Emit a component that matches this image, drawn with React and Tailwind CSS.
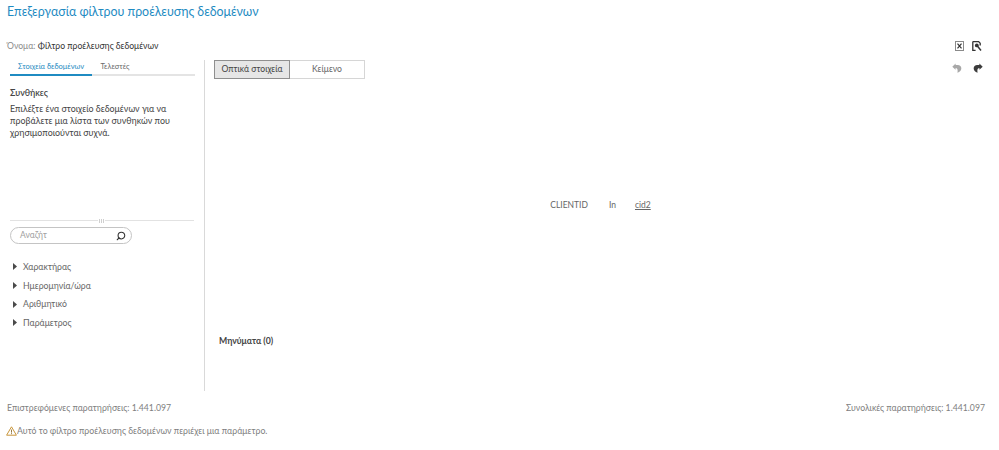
import { Search } from "lucide-react";

const font = { fontFamily: 'Lato, Roboto, sans-serif' };

const Arrow = () => (
  <svg width="4" height="7" viewBox="0 0 4 7" className="shrink-0 mr-[1px]">
    <path d="M0 0 L4 3.5 L0 7 Z" fill="#4a4a4a" />
  </svg>
);

const categories = ["Χαρακτήρας", "Ημερομηνία/ώρα", "Αριθμητικό", "Παράμετρος"];

const LeftPane = () => (
  <div className="w-[205px] shrink-0 border-r border-[#d9d9d9] flex flex-col">
    <div className="ml-[10px] mr-[9px] flex border-b-2 border-[#e4e4e4] h-[16px] text-[7.5px] leading-[14px]">
      <div className="w-[82px] h-[16px] border-b-2 border-[#1f8bc2] text-center text-[#1f8bc2]">
        Στοιχεία δεδομένων
      </div>
      <div className="w-[46px] text-center text-[#6b6b6b]">Τελεστές</div>
    </div>
    <div className="ml-[10px] mt-[10px] h-[134px] text-[8.9px] text-[#444444]">
      <div className="font-semibold leading-[14px]">Συνθήκες</div>
      <p className="mt-[3px] w-[170px] leading-[12px]">
        Επιλέξτε ένα στοιχείο δεδομένων για να προβάλετε μια λίστα των συνθηκών που
        χρησιμοποιούνται συχνά.
      </p>
    </div>
    <div className="mx-[10px] border-t border-[#e2e2e2] relative">
      <div className="absolute left-[88px] -top-[2px] h-[4px] px-[1px] bg-white flex gap-[1px]">
        <span className="w-[1px] bg-[#cfcfcf]" />
        <span className="w-[1px] bg-[#cfcfcf]" />
        <span className="w-[1px] bg-[#cfcfcf]" />
      </div>
    </div>
    <div className="ml-[10px] mt-[6px] w-[122px] h-[17px] rounded-full border border-[#c4c4c4] flex items-center justify-between pl-[9px] pr-[5px]">
      <span className="text-[8.5px] text-[#a0a0a0]">Αναζήτ</span>
      <Search size={10} strokeWidth={2.6} color="#333333" className="-scale-x-100" />
    </div>
    <div className="ml-[13px] mt-[15.5px] flex flex-col gap-[4.75px]">
      {categories.map((name) => (
        <div key={name} className="flex items-center gap-[5px] h-[14px] text-[8.7px] text-[#666666]">
          <Arrow />
          <span>{name}</span>
        </div>
      ))}
    </div>
  </div>
);

const RightPane = () => (
  <div className="flex-1 flex flex-col pl-[9px] pr-[16px]">
    <div className="flex justify-between items-start">
      <div className="flex h-[19px] text-[8.6px] text-[#444444]">
        <div className="w-[76px] flex items-center justify-center bg-[#e6e6e6] border border-[#8f8f8f]">
          Οπτικά στοιχεία
        </div>
        <div className="w-[75px] flex items-center justify-center border border-l-0 border-[#d6d6d6] text-[#666666]">
          Κείμενο
        </div>
      </div>
      <div className="flex gap-[11px] mt-[3px]">
        <svg width="10" height="10" viewBox="0 0 10 10">
          <path d="M3.6 0.5 L0.3 3.8 L3.6 6.8 V5 C5.4 5 6 6.6 5.4 9.7 C8.8 9 10.2 5.6 8.8 3.4 C7.8 2 5.8 1.9 3.6 2 Z" fill="#a8a8a8" />
        </svg>
        <svg width="10" height="10" viewBox="0 0 10 10">
          <path d="M6.4 0.5 L9.7 3.8 L6.4 6.8 V5 C4.6 5 4 6.6 4.6 9.7 C1.2 9 -0.2 5.6 1.2 3.4 C2.2 2 4.2 1.9 6.4 2 Z" fill="#3c3c3c" />
        </svg>
      </div>
    </div>
    <div className="flex-1 flex items-center justify-center text-[8.5px] text-[#666666] pb-[3px]">
      <span className="ml-[4px]">CLIENTID</span>
      <span className="ml-[21px]">In</span>
      <span className="ml-[19px] underline">cid2</span>
    </div>
    <div className="h-[57px] pl-[5px] text-[8.7px] font-bold text-[#444444] leading-[14px]">
      Μηνύματα (0)
    </div>
  </div>
);

export default function App() {
  return (
    <div className="w-[999px] h-[450px] bg-white flex flex-col overflow-hidden" style={font}>
      <h1 className="pl-[7px] pt-[2px] h-[39px] text-[12.4px] leading-[20px] text-[#1f8bc2]">
        Επεξεργασία φίλτρου προέλευσης δεδομένων
      </h1>
      <div className="flex justify-between items-center pl-[7px] pr-[17px] h-[14px] mb-[7px] text-[8.65px]">
        <div>
          <span className="text-[#8c8c8c]">Όνομα:</span>
          <span className="text-[#333333]"> Φίλτρο προέλευσης δεδομένων</span>
        </div>
        <div className="flex gap-[8px]">
          <svg width="9" height="10" viewBox="0 0 9 10">
            <rect x="0.5" y="0.5" width="8" height="9" fill="none" stroke="#8a8a8a" />
            <path d="M2.5 2.6 L6.5 7.4 M6.5 2.6 L2.5 7.4" stroke="#333333" strokeWidth="1.2" />
          </svg>
          <svg width="10" height="10" viewBox="0 0 10 10">
            <path d="M0.8 0.6 H6.6 L8.2 2.2 V4.6 M0.8 0.6 V9.4 H3.6" fill="none" stroke="#333333" strokeWidth="1.3" />
            <circle cx="4.8" cy="4.4" r="1.9" fill="#333333" />
            <path d="M5.8 5.6 L9 9.4" stroke="#333333" strokeWidth="1.5" />
          </svg>
        </div>
      </div>
      <div className="flex h-[331px]">
        <LeftPane />
        <RightPane />
      </div>
      <div className="flex justify-between pl-[7px] pr-[14px] mt-[10px] h-[14px] text-[8.7px] leading-[14px] text-[#808080]">
        <span>Επιστρεφόμενες παρατηρήσεις: 1.441.097</span>
        <span>Συνολικές παρατηρήσεις: 1.441.097</span>
      </div>
      <div className="flex items-center pl-[6px] mt-[9px] h-[14px] text-[8.75px] text-[#808080]">
        <svg width="11" height="10" viewBox="0 0 11 10" className="shrink-0">
          <path d="M5.5 0.8 L10.4 9.2 H0.6 Z" fill="none" stroke="#c8963c" strokeWidth="1" strokeLinejoin="round" />
          <path d="M5.5 3.6 V6.6 M5.5 7.2 V8.2" stroke="#8a6a2c" strokeWidth="0.9" />
        </svg>
        <span>Αυτό το φίλτρο προέλευσης δεδομένων περιέχει μια παράμετρο.</span>
      </div>
    </div>
  );
}
